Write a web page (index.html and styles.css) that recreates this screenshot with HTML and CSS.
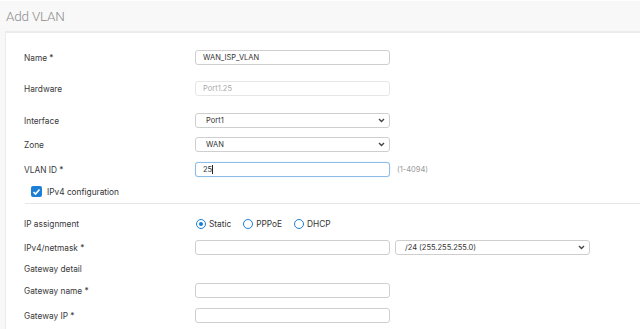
FILE: index.html
```html
<!DOCTYPE html>
<html lang="en">
<head>
  <meta charset="UTF-8"/>
  <title>Add VLAN</title>
  <link rel="stylesheet" href="styles.css">
</head>
<body>
<header class="page-head"><h1>Add VLAN</h1></header>

<section class="card">
  <div class="row r-name">
    <label class="lbl">Name *</label>
    <div class="field">WAN_ISP_VLAN</div>
  </div>
  <div class="row r-hw">
    <label class="lbl">Hardware</label>
    <div class="field disabled">Port1.25</div>
  </div>
  <div class="row r-if">
    <label class="lbl">Interface</label>
    <div class="field select">Port1<span class="chev"><svg width="7" height="5" viewBox="0 0 7 5"><path d="M1 1l2.5 2.5L6 1" fill="none" stroke="#444" stroke-width="1.4"/></svg></span></div>
  </div>
  <div class="row r-zone">
    <label class="lbl">Zone</label>
    <div class="field select">WAN<span class="chev"><svg width="7" height="5" viewBox="0 0 7 5"><path d="M1 1l2.5 2.5L6 1" fill="none" stroke="#444" stroke-width="1.4"/></svg></span></div>
  </div>
  <div class="row r-vlan">
    <label class="lbl">VLAN ID *</label>
    <div class="field focus">25<span class="caret"></span></div>
    <span class="hint">(1-4094)</span>
  </div>
  <div class="check-row">
    <span class="box"><svg width="9" height="8" viewBox="0 0 9 8"><path d="M1.5 4l2 2 4-4.5" fill="none" stroke="#fff" stroke-width="1.6"/></svg></span>
    <span>IPv4 configuration</span>
  </div>
  <hr class="sep">
  <div class="row r-ip">
    <label class="lbl">IP assignment</label>
    <div class="radios">
      <span class="radio on"></span><span class="opt">Static</span>
      <span class="radio"></span><span class="opt">PPPoE</span>
      <span class="radio"></span><span class="opt">DHCP</span>
    </div>
  </div>
  <div class="row r-mask">
    <label class="lbl">IPv4/netmask *</label>
    <div class="field"></div>
    <div class="field select mask">/24 (255.255.255.0)<span class="chev"><svg width="7" height="5" viewBox="0 0 7 5"><path d="M1 1l2.5 2.5L6 1" fill="none" stroke="#444" stroke-width="1.4"/></svg></span></div>
  </div>
  <div class="row r-gwd">
    <label class="lbl">Gateway detail</label>
  </div>
  <div class="row r-gwn">
    <label class="lbl">Gateway name *</label>
    <div class="field"></div>
  </div>
  <div class="row r-gwip">
    <label class="lbl">Gateway IP *</label>
    <div class="field"></div>
  </div>
</section>
</body>
</html>
```
FILE: styles.css
```css
*{box-sizing:border-box;font-family:Inter,"Open Sans",sans-serif}
body{margin:0;background:#f8f8f8;height:329px;overflow:hidden;border-top:1px solid #fff}
.page-head{height:30px;display:flex;align-items:center;padding-left:6px}
.page-head h1{margin:0;font-family:Roboto,sans-serif;font-size:13.5px;font-weight:300;color:#8c8c8c;letter-spacing:-.2px}
.card{margin-left:5px;background:#fff;border-top:2px solid #ececec;border-left:1px solid #ececec;padding:0 0 0 18px;height:298px;overflow:hidden}
.row{display:flex;align-items:center;height:15px}
.lbl{width:171px;flex:none;font-size:8.3px;color:#3a3a3a}
.field{width:195px;height:15px;border:1px solid #cfcfcf;border-radius:3px;background:#fff;font-size:7.5px;color:#333;padding-left:7px;display:flex;align-items:center;position:relative}
.field.disabled{border-color:#e6e6e6;color:#aaa}
.field.select{padding-left:10px}
.field.focus{border-color:#8fbce6;box-shadow:0 0 1px #b9d6f0}
.field.mask{margin-left:5px;width:195px;padding-left:9px}
.chev{position:absolute;right:4px;top:4px;display:flex}
.caret{display:inline-block;width:1px;height:9px;background:#222}
.hint{margin-left:7px;font-size:7.5px;color:#999}
.r-name{margin-top:17px}
.r-hw{margin-top:16px}
.r-if{margin-top:17px}
.r-zone{margin-top:9px}
.r-vlan{margin-top:10px}
.check-row{display:flex;align-items:center;gap:5px;margin:9px 0 0 7px;height:11px;font-size:8.3px;color:#333}
.box{width:11px;height:11px;border-radius:2px;background:#1d7fd3;display:flex;align-items:center;justify-content:center}
.sep{border:0;border-top:1px solid #e6e6e6;margin:6px 0 0 1px}
.r-ip{margin-top:12px}
.radios{display:flex;align-items:center;font-size:8.3px;color:#333}
.radio{width:10px;height:10px;border:1.6px solid #1d7fd3;border-radius:50%;margin-left:1px;display:flex;align-items:center;justify-content:center}
.radio.on::after{content:"";width:4px;height:4px;border-radius:50%;background:#1d7fd3}
.opt{margin:0 11px 0 3px}
.r-mask{margin-top:9px}
.r-gwd{margin-top:6px}
.r-gwn{margin-top:7px}
.r-gwip{margin-top:10px}
```
